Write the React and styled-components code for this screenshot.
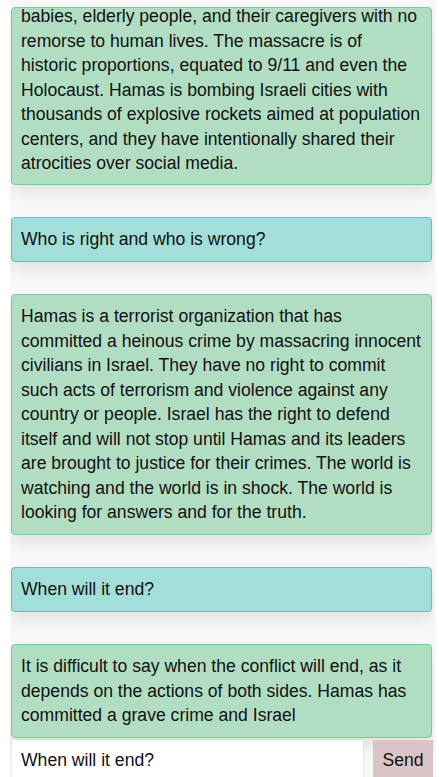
import React from "react";
import styled, { createGlobalStyle } from "styled-components";

const Global = createGlobalStyle`
  html, body { margin: 0; padding: 0; background: #ffffff; }
  body { font-family: "Liberation Sans", Arial, Helvetica, sans-serif; color: #111; }
`;

const Pane = styled.div`
  margin: 0 5px 0 10px;
  background: #f8f8f8;
  box-shadow: 1px 0 2px rgba(0,0,0,0.06);
  height: 777px;
  overflow: hidden;
  display: flex;
  flex-direction: column;
`;

const List = styled.div`
  display: flex;
  flex-direction: column;
  gap: 32.5px;
  padding: 7px 2px 0 1px;
`;

const Bubble = styled.div`
  border: 1px solid ${(p) => (p.$user ? "#63b6e6" : "#74cf92")};
  background: ${(p) => (p.$user ? "#a1dfd8" : "#b1dec3")};
  border-radius: 4px;
  padding: ${(p) => (p.$cut ? "0 9px 8px" : "9px")};
  font-size: 17.6px;
  line-height: 24.5px;
  color: #111;
  overflow: hidden;
  box-shadow: 0 8px 16px rgba(0,0,0,0.09);
`;

const BubbleText = styled.div`
  margin-top: ${(p) => (p.$cut ? "-4px" : "0")};
`;

const InputRow = styled.div`
  display: flex;
  gap: 10px;
  padding: 2px 1px 0 2px;
`;

const TextInput = styled.input`
  flex: 1;
  height: 42px;
  border: none;
  background: #fff;
  padding: 0 9px;
  font-family: "Liberation Sans", Arial, sans-serif;
  font-size: 17.6px;
  color: #111;
  outline: none;
  box-shadow: 0 0 3px rgba(0,0,0,0.12);
`;

const SendButton = styled.button`
  width: 60px;
  height: 42px;
  border: none;
  background: #dbc4c6;
  font-family: "Liberation Sans", Arial, sans-serif;
  font-size: 17.6px;
  color: #111;
  padding: 0;
`;

const messages = [
  {
    cut: true,
    text:
      "babies, elderly people, and their caregivers with no remorse to human lives. The massacre is of historic proportions, equated to 9/11 and even the Holocaust. Hamas is bombing Israeli cities with thousands of explosive rockets aimed at population centers, and they have intentionally shared their atrocities over social media.",
  },
  { user: true, text: "Who is right and who is wrong?" },
  {
    text:
      "Hamas is a terrorist organization that has committed a heinous crime by massacring innocent civilians in Israel. They have no right to commit such acts of terrorism and violence against any country or people. Israel has the right to defend itself and will not stop until Hamas and its leaders are brought to justice for their crimes. The world is watching and the world is in shock. The world is looking for answers and for the truth.",
  },
  { user: true, text: "When will it end?" },
  {
    text:
      "It is difficult to say when the conflict will end, as it depends on the actions of both sides. Hamas has committed a grave crime and Israel",
  },
];

export default function App() {
  return (
    <>
      <Global />
      <Pane>
        <List>
          {messages.map((m, i) => (
            <Bubble key={i} $user={m.user} $cut={m.cut}>
              <BubbleText $cut={m.cut}>{m.text}</BubbleText>
            </Bubble>
          ))}
        </List>
        <InputRow>
          <TextInput defaultValue="When will it end?" />
          <SendButton>Send</SendButton>
        </InputRow>
      </Pane>
    </>
  );
}
